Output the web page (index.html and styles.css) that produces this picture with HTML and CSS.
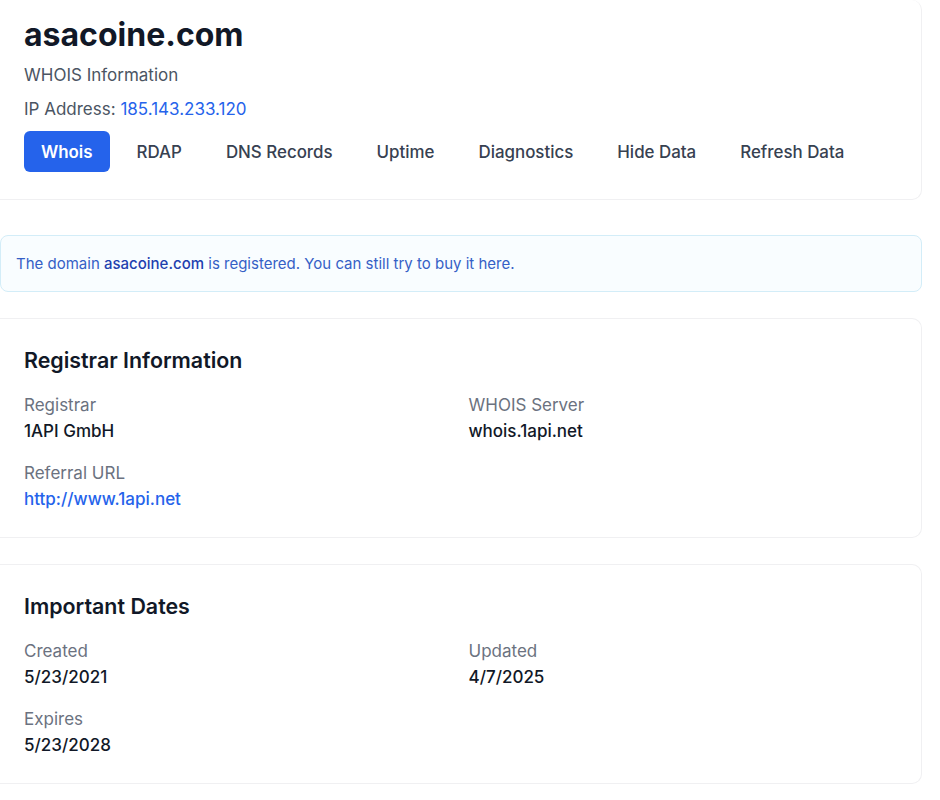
FILE: index.html
```html
<!DOCTYPE html>
<html lang="en">
  <head>
    <meta charset="UTF-8" />
    <meta name="viewport" content="width=device-width, initial-scale=1.0" />
    <title>asacoine.com WHOIS</title>
    <link rel="stylesheet" href="styles.css">
  </head>
  <body>
    <main class="page">
      <section class="card header-card">
        <h1 class="domain">asacoine.com</h1>
        <p class="subtitle">WHOIS Information</p>
        <p class="ip">IP Address: <a href="#">185.143.233.120</a></p>
        <nav class="tabs">
          <button type="button" class="tab active">Whois</button>
          <button type="button" class="tab">RDAP</button>
          <button type="button" class="tab">DNS Records</button>
          <button type="button" class="tab">Uptime</button>
          <button type="button" class="tab">Diagnostics</button>
          <button type="button" class="tab">Hide Data</button>
          <button type="button" class="tab">Refresh Data</button>
        </nav>
      </section>

      <div class="notice">
        <p>The domain <strong>asacoine.com</strong> is registered. You can still try to buy it here.</p>
      </div>

      <section class="card">
        <h2 class="card-title">Registrar Information</h2>
        <dl class="fields">
          <div class="field">
            <dt>Registrar</dt>
            <dd>1API GmbH</dd>
          </div>
          <div class="field">
            <dt>WHOIS Server</dt>
            <dd>whois.1api.net</dd>
          </div>
          <div class="field">
            <dt>Referral URL</dt>
            <dd><a href="#">http://www.1api.net</a></dd>
          </div>
        </dl>
      </section>

      <section class="card">
        <h2 class="card-title">Important Dates</h2>
        <dl class="fields">
          <div class="field">
            <dt>Created</dt>
            <dd>5/23/2021</dd>
          </div>
          <div class="field">
            <dt>Updated</dt>
            <dd>4/7/2025</dd>
          </div>
          <div class="field">
            <dt>Expires</dt>
            <dd>5/23/2028</dd>
          </div>
        </dl>
      </section>
    </main>
  </body>
</html>
```

FILE: styles.css
```css
body {
  margin: 0;
  font-family: Inter, "Noto Sans", sans-serif;
  color: #111827;
  background: #ffffff;
}
a {
  color: #2563eb;
  text-decoration: none;
}
.page {
  width: 922px;
  display: flex;
  flex-direction: column;
}
.card {
  background: #ffffff;
  border: 1px solid #f0f0f2;
  border-left: none;
  border-radius: 0 10px 10px 0;
  padding: 26px 24px 25px 24px;
  margin-bottom: 26px;
}
.header-card {
  border-top: none;
  padding-top: 15px;
  padding-bottom: 27px;
  margin-bottom: 35px;
}
.domain {
  margin: 0;
  font-size: 32px;
  line-height: 40px;
  font-weight: 700;
}
.subtitle,
.ip {
  margin: 7px 0 0;
  font-size: 17px;
  line-height: 26px;
  color: #4b5563;
}
.ip {
  margin-top: 8px;
}
.tabs {
  display: flex;
  gap: 10px;
  margin-top: 9px;
}
.tab {
  font-family: inherit;
  font-size: 16.9px;
  font-weight: 500;
  color: #374151;
  background: none;
  border: none;
  border-radius: 6px;
  height: 41px;
  padding: 0 17px;
}
.tab.active {
  background: #2563eb;
  color: #ffffff;
  font-weight: 600;
}
.notice {
  background: #f9fdff;
  border: 1px solid #d3edf8;
  border-radius: 8px;
  padding: 0 15px;
  height: 55px;
  display: flex;
  align-items: center;
  font-size: 15px;
  color: #3560c6;
  margin-bottom: 26px;
}
.notice p {
  margin: 0;
}
.notice strong {
  font-weight: 500;
  color: #1e40af;
}
.card-title {
  margin: 0 0 17px;
  font-size: 21.4px;
  line-height: 30px;
  font-weight: 600;
}
.fields {
  display: grid;
  grid-template-columns: 1fr 1fr;
  column-gap: 16px;
  row-gap: 16px;
  margin: 0;
}
.field dt {
  font-size: 17px;
  line-height: 26px;
  color: #6b7280;
}
.field dd {
  margin: 0;
  font-size: 17px;
  line-height: 26px;
  font-weight: 500;
  color: #111827;
}
```
